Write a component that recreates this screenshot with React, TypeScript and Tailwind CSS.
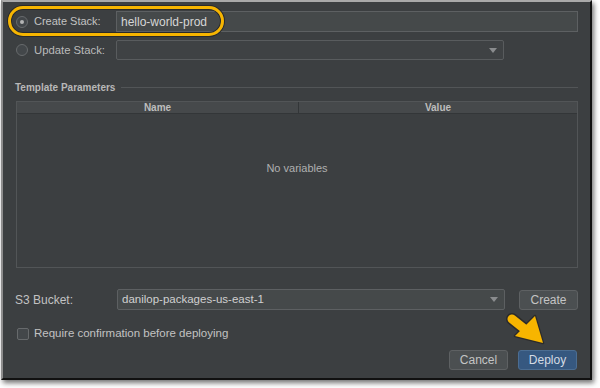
const FONT = "font-['Liberation_Sans',Arial,sans-serif]";

function Radio({ checked }: { checked?: boolean }) {
  return (
    <span className="w-[12px] h-[12px] rounded-full border border-[#676a6c] bg-[#43474a] flex items-center justify-center shrink-0">
      {checked && <span className="w-[4px] h-[4px] rounded-full bg-[#b4b4b4]" />}
    </span>
  );
}

function Caret() {
  return (
    <svg width="8" height="5" viewBox="0 0 8 5" className="shrink-0">
      <path d="M0 0 L8 0 L4 5 Z" fill="#8a8c8e" />
    </svg>
  );
}

function Button({ label, primary }: { label: string; primary?: boolean }) {
  return (
    <button
      className={
        primary
          ? "w-[59px] h-[20px] rounded-[3px] border border-[#4b6d92] bg-[#365880] text-[12px] text-[#d4dbe4] flex items-center justify-center"
          : "w-[59px] h-[20px] rounded-[3px] border border-[#5e6163] bg-[#4b4f51] text-[12px] text-[#c4c4c4] flex items-center justify-center"
      }
    >
      {label}
    </button>
  );
}

function Arrow() {
  return (
    <svg
      width="50"
      height="44"
      viewBox="0 0 50 44"
      className="absolute left-[500px] top-[306px]"
    >
      <line x1="12" y1="13" x2="27" y2="25" stroke="#2b2b2b" strokeWidth="12" strokeLinecap="round" />
      <path d="M35 10 L43 37 L15 30 Z" fill="#2b2b2b" stroke="#2b2b2b" strokeWidth="2.5" strokeLinejoin="round" />
      <line x1="12" y1="13" x2="27" y2="25" stroke="#f7b500" strokeWidth="9" strokeLinecap="round" />
      <path d="M35 10 L43 37 L15 30 Z" fill="#f7b500" />
    </svg>
  );
}

export default function App() {
  return (
    <div className={`relative w-[600px] h-[388px] bg-white overflow-hidden ${FONT}`}>
      {/* Dialog panel */}
      <div className="ml-px w-[591px] h-[380px] bg-[#3c3f41] border-l-2 border-l-[#8d8d8d] border-t-2 border-t-[#a9a9a9] border-r-2 border-r-[#111] border-b-2 border-b-[#111] shadow-[2px_3px_5px_rgba(0,0,0,0.55)] flex flex-col text-[#bbbbbb]">
        {/* Create Stack */}
        <div className="flex items-center h-[21px] mt-[9px] pl-[13px] pr-[12px]">
          <div className="w-[100px] flex items-center gap-[6px] shrink-0">
            <Radio checked />
            <span className="text-[11px] text-[#c2c2c2]">Create Stack:</span>
          </div>
          <div className="flex-1 h-[21px] border border-[#5d6062] bg-[#45494a] flex items-center pl-[4px] text-[12px] text-[#d6d6d6]">
            hello-world-prod
          </div>
        </div>

        {/* Update Stack */}
        <div className="flex items-center h-[20px] mt-[8px] pl-[13px]">
          <div className="w-[100px] flex items-center gap-[6px] shrink-0">
            <Radio />
            <span className="text-[11.3px] text-[#bbbbbb]">Update Stack:</span>
          </div>
          <div className="w-[388px] h-[20px] border border-[#595c5e] rounded-[2px] bg-[#3f4244] flex items-center justify-end pr-[6px]">
            <Caret />
          </div>
        </div>

        {/* Template Parameters */}
        <div className="flex items-center h-[14px] mt-[20px] pl-[12px] pr-[12px]">
          <span className="text-[10px] font-bold text-[#b8b8b8]">Template Parameters</span>
          <div className="flex-1 h-px bg-[#525557] ml-[6px]" />
        </div>

        {/* Table */}
        <div className="mt-[7px] ml-[13px] mr-[12px] h-[167px] border border-[#525557] flex flex-col">
          <div className="h-[12px] grid grid-cols-[282px_1fr] bg-[#46494b] border-b border-[#333638] text-[10px] font-bold text-[#bdbdbd] leading-[12px]">
            <div className="text-center border-r border-[#333638]">Name</div>
            <div className="text-center">Value</div>
          </div>
          <div className="flex-1 flex justify-center pt-[46px] text-[11px] text-[#b0b0b0]">
            No variables
          </div>
        </div>

        {/* S3 Bucket */}
        <div className="flex items-center h-[21px] mt-[21px] pl-[12px]">
          <span className="w-[102px] text-[12px] text-[#c2c2c2] shrink-0">S3 Bucket:</span>
          <div className="w-[388px] h-[21px] border border-[#5d6062] rounded-[2px] bg-[#45494a] flex items-center justify-between pl-[4px] pr-[6px] text-[11.5px] text-[#d0d0d0]">
            <span>danilop-packages-us-east-1</span>
            <Caret />
          </div>
          <div className="ml-[14px]">
            <Button label="Create" />
          </div>
        </div>

        {/* Require confirmation */}
        <div className="flex items-center h-[12px] mt-[18px] pl-[14px] gap-[5px]">
          <span className="w-[12px] h-[12px] rounded-[2px] border border-[#676a6c] bg-[#43474a] shrink-0" />
          <span className="text-[11.5px] text-[#c2c2c2]">Require confirmation before deploying</span>
        </div>

        {/* Footer buttons */}
        <div className="flex justify-end gap-[10px] mt-[10px] pr-[13px]">
          <Button label="Cancel" />
          <Button label="Deploy" primary />
        </div>
      </div>

      {/* Annotations */}
      <div className="absolute left-[8px] top-[6px] w-[216px] h-[30px] rounded-full border-[3px] border-[#f7b500] shadow-[0_0_0_1px_#2a2a2a,inset_0_0_0_1px_#2a2a2a]" />
      <Arrow />
    </div>
  );
}
